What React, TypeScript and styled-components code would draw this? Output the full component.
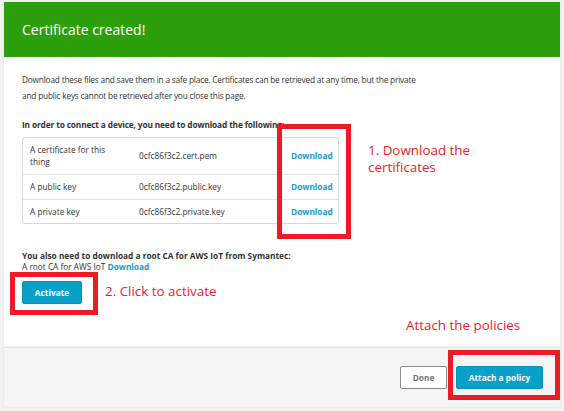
import React from "react";
import styled, { createGlobalStyle } from "styled-components";

const GlobalStyle = createGlobalStyle`
  html, body {
    margin: 0;
    padding: 0;
    background: #f2f2f2;
    font-family: "Open Sans", "Noto Sans", Arial, sans-serif;
  }
`;

const Page = styled.div`
  position: relative;
  width: 564px;
  height: 411px;
  padding: 2px 4px 4px 4px;
  box-sizing: border-box;
  overflow: hidden;
`;

const Panel = styled.div`
  display: flex;
  flex-direction: column;
  height: 405px;
  background: #fff;
  box-shadow: 0 0 1px rgba(0, 0, 0, 0.15);
`;

const Header = styled.div`
  height: 55px;
  background: #2ca00c;
  color: #fff;
  display: flex;
  align-items: center;
  padding-left: 18px;
  font-size: 14px;
`;

const Body = styled.div`
  flex: 1;
  padding: 15px 18px 0 18px;
  color: #333;
  font-size: 8.3px;
`;

const Text = styled.p<{ $bold?: boolean; $top?: number; $tight?: number }>`
  margin: ${(p) => p.$top ?? 0}px 0 0 0;
  line-height: 16px;
  letter-spacing: ${(p) => p.$tight ?? 0}px;
  font-weight: ${(p) => (p.$bold ? 700 : 400)};
`;

const SmallText = styled.p<{ $bold?: boolean; $top?: number }>`
  margin: ${(p) => p.$top ?? 0}px 0 0 0;
  line-height: 11px;
  font-weight: ${(p) => (p.$bold ? 700 : 400)};
`;

const FileTable = styled.div`
  margin-top: 4px;
  width: 317px;
  border: 1px solid #d9d9d9;
  border-radius: 3px;
  box-sizing: border-box;
`;

const FileRow = styled.div<{ $h: number }>`
  display: grid;
  grid-template-columns: 109px 152px 1fr;
  align-items: center;
  height: ${(p) => p.$h}px;
  padding-left: 7px;
  box-sizing: border-box;
  & + & {
    border-top: 1px solid #e3e3e3;
  }
`;

const Cell = styled.div`
  line-height: 12px;
  max-width: 88px;
`;

const Link = styled.a`
  color: #1a9bc9;
  font-weight: 700;
  text-decoration: none;
`;

const Button = styled.button<{ $primary?: boolean; $w: number }>`
  width: ${(p) => p.$w}px;
  height: 23px;
  border-radius: 2px;
  font-family: inherit;
  font-size: 8.3px;
  font-weight: 700;
  cursor: pointer;
  padding: 0;
  background: ${(p) => (p.$primary ? "#06a0c9" : "#fff")};
  color: ${(p) => (p.$primary ? "#fff" : "#777")};
  border: ${(p) => (p.$primary ? "1px solid #0793b8" : "1px solid #8a8a8a")};
`;

const ActivateWrap = styled.div`
  margin-top: 9px;
`;

const Footer = styled.div`
  height: 60px;
  background: #f5f5f5;
  border-top: 1px solid #e2e2e2;
  box-shadow: 0 -1px 1px rgba(0, 0, 0, 0.05);
  display: flex;
  justify-content: flex-end;
  align-items: center;
  gap: 9px;
  padding-right: 17px;
  box-sizing: border-box;
`;

const RedBox = styled.div<{ $x: number; $y: number; $w: number; $h: number }>`
  position: absolute;
  left: ${(p) => p.$x}px;
  top: ${(p) => p.$y}px;
  width: ${(p) => p.$w}px;
  height: ${(p) => p.$h}px;
  border: 5px solid #ed1c24;
  box-sizing: border-box;
`;

const Note = styled.div<{ $x: number; $y: number }>`
  position: absolute;
  left: ${(p) => p.$x}px;
  top: ${(p) => p.$y}px;
  color: #ec2229;
  font-family: "Open Sans", "Noto Sans", sans-serif;
  font-size: 13.4px;
  line-height: 17px;
`;

const files = [
  { label: "A certificate for this thing", name: "0cfc86f3c2.cert.pem", h: 36 },
  { label: "A public key", name: "0cfc86f3c2.public.key", h: 25 },
  { label: "A private key", name: "0cfc86f3c2.private.key", h: 24 },
];

export default function App() {
  return (
    <Page>
      <GlobalStyle />
      <Panel>
        <Header>Certificate created!</Header>
        <Body>
          <Text $tight={-0.2}>
            Download these files and save them in a safe place. Certificates can be retrieved at any time, but the private
            <br />
            and public keys cannot be retrieved after you close this page.
          </Text>
          <Text $bold $top={13} $tight={-0.13}>
            In order to connect a device, you need to download the following:
          </Text>
          <FileTable>
            {files.map((f) => (
              <FileRow key={f.name} $h={f.h}>
                <Cell>{f.label}</Cell>
                <Cell>{f.name}</Cell>
                <Cell>
                  <Link>Download</Link>
                </Cell>
              </FileRow>
            ))}
          </FileTable>
          <SmallText $bold $top={26}>
            You also need to download a root CA for AWS IoT from Symantec:
          </SmallText>
          <SmallText>
            A root CA for AWS IoT <Link>Download</Link>
          </SmallText>
          <ActivateWrap>
            <Button $primary $w={60}>Activate</Button>
          </ActivateWrap>
        </Body>
        <Footer>
          <Button $w={47}>Done</Button>
          <Button $primary $w={87}>Attach a policy</Button>
        </Footer>
      </Panel>
      <RedBox $x={277} $y={124} $w={74} $h={115} />
      <RedBox $x={10} $y={272} $w={88} $h={43} />
      <RedBox $x={448} $y={350} $w={112} $h={50} />
      <Note $x={368} $y={142}>
        1. Download the
        <br />
        certificates
      </Note>
      <Note $x={105} $y={283}>2. Click to activate</Note>
      <Note $x={406} $y={317}>Attach the policies</Note>
    </Page>
  );
}
